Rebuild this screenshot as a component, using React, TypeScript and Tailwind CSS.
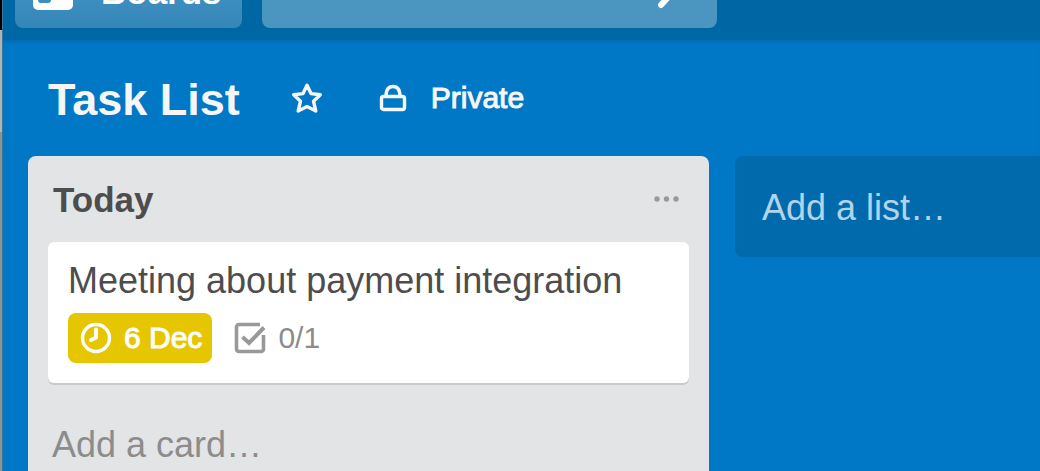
import React from "react";

function BoardsIcon() {
  return (
    <svg width="40" height="36" viewBox="0 0 40 36" aria-hidden="true">
      <path
        fill="#fff"
        fillRule="evenodd"
        d="M5 0h30a5 5 0 0 1 5 5v26a5 5 0 0 1-5 5H5a5 5 0 0 1-5-5V5a5 5 0 0 1 5-5ZM7 5a2 2 0 0 0-2 2v19a3 3 0 0 0 3 3h7a3 3 0 0 0 3-3V7a2 2 0 0 0-2-2ZM24 5a2 2 0 0 0-2 2v10a2 2 0 0 0 2 2h9a2 2 0 0 0 2-2V7a2 2 0 0 0-2-2Z"
      />
    </svg>
  );
}

function SearchIcon() {
  return (
    <svg width="34" height="34" viewBox="0 0 34 34" fill="none" stroke="#fff" aria-hidden="true">
      <circle cx="23" cy="11" r="9" strokeWidth="4" />
      <path d="M16 19 6 30" strokeWidth="6" strokeLinecap="round" />
    </svg>
  );
}

function StarIcon() {
  return (
    <svg width="32" height="32" viewBox="0 0 32 32" fill="none" stroke="#f6f6f6" aria-hidden="true">
      <path
        d="M16 3.200 20 11.600 29.300 12.700 22.500 19.200 24.800 29 16 24.600 7.200 29 9.500 19.200 2.700 12.700 12 11.600Z"
        strokeWidth="3.400"
        strokeLinejoin="round"
      />
    </svg>
  );
}

function LockIcon() {
  return (
    <svg width="28" height="28" viewBox="0 0 28 28" fill="none" stroke="#f6f6f6" strokeWidth="3.400" aria-hidden="true">
      <rect x="2.500" y="12.500" width="23" height="13" rx="2" />
      <path d="M7 12.500C7 5.500 9.500 2.500 14 2.500S21 5.500 21 12.500" />
    </svg>
  );
}

function ClockIcon() {
  return (
    <svg width="32" height="32" viewBox="0 0 32 32" fill="none" stroke="#fff" aria-hidden="true">
      <circle cx="16" cy="16" r="13.500" strokeWidth="3.400" />
      <path d="M16 7.500V15.500L11 18" strokeWidth="4" strokeLinecap="round" strokeLinejoin="round" />
    </svg>
  );
}

function CheckIcon() {
  return (
    <svg width="32" height="32" viewBox="0 0 32 32" fill="none" stroke="#999" strokeWidth="3.600" aria-hidden="true">
      <path d="M26 2.500H5A2.500 2.500 0 0 0 2.500 5V27A2.500 2.500 0 0 0 5 29.500H27A2.500 2.500 0 0 0 29.500 27V13" />
      <path d="M8.500 15 15 21 30 5.500" strokeWidth="4" />
    </svg>
  );
}

function MoreIcon() {
  return (
    <svg width="26" height="8" viewBox="0 0 26 8" fill="#999" aria-hidden="true">
      <circle cx="3" cy="4" r="2.700" />
      <circle cx="12.500" cy="4" r="2.700" />
      <circle cx="22" cy="4" r="2.700" />
    </svg>
  );
}

function TopBar() {
  return (
    <header className="flex h-10 items-end gap-5 overflow-hidden bg-[#0067a5] pb-3 pl-3">
      <button
        type="button"
        className="flex h-[72px] shrink-0 items-center gap-7 rounded-lg bg-linear-to-b from-[#4d98c7] to-[#3387b9] px-5 pl-[18px] text-[35px] font-bold text-white"
      >
        <BoardsIcon />
        Boards
      </button>
      <label className="flex h-[72px] w-[455px] items-center rounded-lg bg-[#4b95c1] pr-7 pl-5">
        <input type="search" aria-label="Search" className="min-w-0 flex-1 bg-transparent text-4xl text-white outline-none" />
        <SearchIcon />
      </label>
    </header>
  );
}

function BoardHeader() {
  return (
    <div className="flex h-[116px] items-center pl-[45px] text-[#f6f6f6] shadow-[inset_0_4px_4px_-2px_#006cb3]">
      <h1 className="pt-1 text-[45px] leading-[52px] font-bold">Task List</h1>
      <button type="button" aria-label="Star board" className="ml-[51px]">
        <StarIcon />
      </button>
      <button type="button" className="ml-14 flex items-center gap-6 text-3xl leading-9 [-webkit-text-stroke:1px_#f6f6f6]">
        <LockIcon />
        Private
      </button>
    </div>
  );
}

function Card() {
  return (
    <article className="rounded-md bg-white px-5 pt-[19px] pb-5 shadow-[0_2px_0_#c9cacb]">
      <h3 className="text-4xl leading-10 text-[#4d4d4d]">Meeting about payment integration</h3>
      <div className="mt-3 flex items-center gap-[22px]">
        <span className="flex h-[50px] items-center gap-3 rounded-lg bg-[#e6c600] pr-[10px] pl-3 text-3xl text-white [-webkit-text-stroke:1px_#fff]">
          <ClockIcon />
          6 Dec
        </span>
        <span className="flex items-center gap-3 text-3xl text-[#8c8c8c]">
          <CheckIcon />
          0/1
        </span>
      </div>
    </article>
  );
}

function TaskColumn() {
  return (
    <section className="w-[681px] shrink-0 rounded-t-lg bg-[#e2e4e6] px-5">
      <div className="flex h-[86px] items-center justify-between pr-[9px] pl-[5px]">
        <h2 className="pt-[2px] text-[35px] leading-10 font-bold text-[#4d4d4d]">Today</h2>
        <button type="button" aria-label="List actions">
          <MoreIcon />
        </button>
      </div>
      <Card />
      <button type="button" className="mt-[42px] mb-2 ml-1 block text-4xl leading-10 text-[#8c8c8c]">
        Add a card…
      </button>
    </section>
  );
}

export default function App() {
  return (
    <div className="flex h-screen overflow-hidden bg-[#0078c6] font-['Liberation_Sans',Arial,sans-serif]">
      <div className="flex w-[3px] shrink-0 flex-col border-r border-[#3477a0]">
        <div className="h-[30px] bg-black" />
        <div className="h-[102px] bg-[#b5b3b1]" />
        <div className="flex-1 bg-[#8f9396]" />
      </div>
      <main className="flex min-w-0 flex-1 flex-col">
        <TopBar />
        <BoardHeader />
        <div className="flex min-h-0 flex-1 gap-[26px] overflow-hidden pl-[25px]">
          <TaskColumn />
          <button
            type="button"
            className="h-[101px] flex-1 self-start rounded-l-lg bg-[#006aad] pt-[2px] pl-[27px] text-left text-4xl whitespace-nowrap text-[#b2d4ea]"
          >
            Add a list…
          </button>
        </div>
      </main>
    </div>
  );
}
